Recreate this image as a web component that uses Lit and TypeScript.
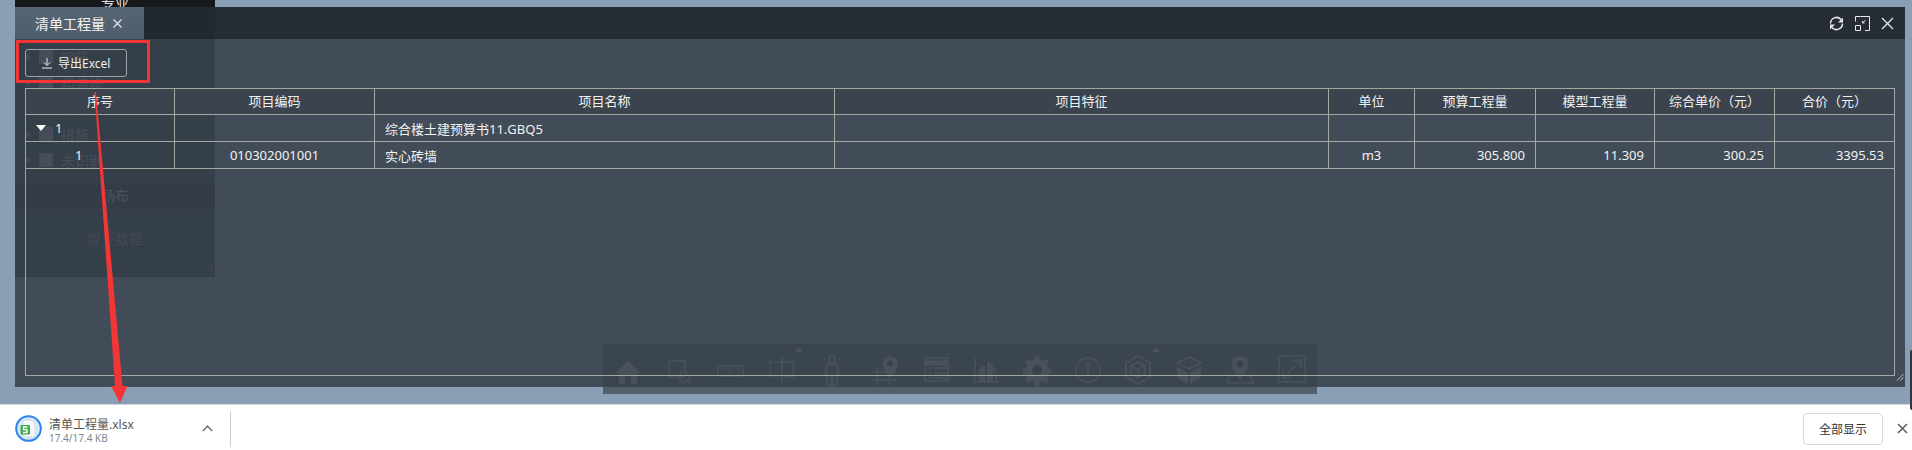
import { LitElement, html, css, svg } from "lit";
import { customElement } from "lit/decorators.js";

const ghostIcons = [
  svg`<path d="M13 6 L0 18 H4 V29 H10 V21 H16 V29 H22 V18 H26 Z" fill="currentColor" stroke="none"/>`,
  svg`<path d="M18 22H3V6H19V17"/><circle cx="18" cy="22" r="5"/><path d="M22 26l3 3"/>`,
  svg`<path d="M1 11H26V21H1Z"/><path d="M5 11v4M9 11v3M13 11v6M17 11v3M21 11v4"/>`,
  svg`<path d="M2 7H14M2 7V22M2 22H14" stroke-dasharray="3 2"/><path d="M14 7H25V22H14"/><path d="M14 2V28"/>`,
  svg`<circle cx="13" cy="4" r="3"/><path d="M8 9H18L20 19H18V30H14V21H12V30H8V19H6Z"/>`,
  svg`<path d="M20 1a7.500 7.500 0 0 1 7.500 7.500C27.500 13 23 19 20 23C17 19 12.500 13 12.500 8.500A7.500 7.500 0 0 1 20 1Z" fill="currentColor" stroke="none"/><circle cx="20" cy="8.500" r="3" fill="#3d4651" stroke="none"/><path d="M2 17H27M7 12V30M19 24V30M1 25H26"/>`,
  svg`<path d="M4 3H27V26H4Z"/><path d="M4 8H27" stroke-width="5"/><path d="M8 13h2M13 13h14M8 18h2M13 18h14M8 23h2M13 23h14"/>`,
  svg`<path d="M3 3V27H27"/><path d="M7 26V14L13 10V26ZM15 26V6L21 10V26Z" fill="currentColor" stroke="none"/><path d="M22 14L24 20V26"/>`,
  svg`<path d="M12 1h4l1 4 3 1 3-2 3 3-2 3 1 3 4 1v4l-4 1-1 3 2 3-3 3-3-2-3 1-1 4h-4l-1-4-3-1-3 2-3-3 2-3-1-3-4-1v-4l4-1 1-3-2-3 3-3 3 2 3-1Z" fill="currentColor" stroke="none"/><circle cx="14" cy="15" r="5" fill="#3d4651" stroke="none"/>`,
  svg`<circle cx="14" cy="15" r="12"/><path d="M14 13V21" stroke-width="2"/><circle cx="14" cy="9" r="1.200" fill="currentColor"/>`,
  svg`<path d="M13 1L25 8V22L13 29L1 22V8Z" stroke-width="2"/><path d="M6 11L13 7L20 11V19L13 23L6 19Z"/><path d="M6 11L13 15L20 11M13 15V23"/>`,
  svg`<path d="M13 2L25 8L13 14L1 8Z"/><path d="M1 12L12 18V29L1 23ZM25 12L14 18V29L25 23Z" fill="currentColor" stroke="none"/>`,
  svg`<path d="M13 1a8.500 8.500 0 0 1 8.500 8.500C21.500 14 16 21 13 25C10 21 4.500 14 4.500 9.500A8.500 8.500 0 0 1 13 1Z" fill="currentColor" stroke="none"/><circle cx="13" cy="9" r="3.500" fill="#3d4651" stroke="none"/><path d="M6 20H3L0 28H26L23 20H20"/>`,
  svg`<path d="M1 1H27V27H1Z"/><path d="M5 23L23 5M15 5H23V13M5 15V23H13"/>`,
];

const columns = [
  { title: "序号", width: 149 },
  { title: "项目编码", width: 200 },
  { title: "项目名称", width: 460 },
  { title: "项目特征", width: 494 },
  { title: "单位", width: 86 },
  { title: "预算工程量", width: 121 },
  { title: "模型工程量", width: 119 },
  { title: "综合单价（元）", width: 120 },
  { title: "合价（元）", width: 119 },
];

@customElement("app-root")
export class AppRoot extends LitElement {
  static styles = css`
    :host {
      display: flex;
      flex-direction: column;
      width: 1912px;
      height: 450px;
      overflow: hidden;
      position: relative;
      font-family: "Noto Sans", "Noto Sans CJK SC", sans-serif;
      background: #8a9fb5;
    }
    .scene { flex: 1; position: relative; }

    .side {
      position: absolute; left: 15px; top: -10px; width: 200px; height: 287px;
      background: rgba(0, 0, 0, .8); color: #ddd; font-size: 14px;
      display: flex; flex-direction: column;
    }
    .side-head { height: 25px; line-height: 25px; text-align: center; background: rgba(0,0,0,.2); flex: none; }
    .side-rows { padding-top: 29px; height: 139px; flex: none; box-sizing: content-box; display: flex; flex-direction: column; }
    .side-row { height: 25.7px; display: flex; align-items: center; gap: 8px; padding-left: 11px; flex: none; }
    .side-row i { border-left: 5px solid #999; border-top: 4px solid transparent; border-bottom: 4px solid transparent; }
    .side-row b { width: 14px; height: 14px; background: #bbb; border-radius: 2px; }
    .side-row span { opacity: .8; }
    .side-section {
      height: 24px; line-height: 24px; text-align: center; background: rgba(0,0,0,.6);
      border-top: 1px solid rgba(255,255,255,.08); border-bottom: 1px solid rgba(255,255,255,.08); flex: none;
    }
    .side-empty { flex: 1; text-align: center; padding-top: 19px; font-size: 14px; color: #888; }
    .side-grip { position: absolute; right: 2px; bottom: 2px; }

    .toolbar {
      position: absolute; left: 603px; top: 344px; height: 50px; display: flex;
      background: rgba(0, 0, 0, .4); color: #dcdcdc;
    }
    .tool { width: 51px; display: flex; align-items: center; justify-content: center; position: relative; padding-top: 2px; box-sizing: border-box; }
    .tool svg { fill: none; stroke: currentColor; stroke-width: 1.5; width: 28px; height: 31px; }
    .tool.more::after {
      content: ""; position: absolute; left: 39px; top: 3px;
      border-bottom: 5px solid #dcdcdc; border-left: 4.500px solid transparent; border-right: 4.500px solid transparent;
    }

    .modal {
      position: absolute; left: 15px; top: 7px; width: 1890px; height: 380px;
      background: rgba(57, 67, 78, .9); display: flex; flex-direction: column; color: #fff;
    }
    .modal-head {
      height: 32px; flex: none; display: flex; align-items: stretch; justify-content: space-between;
      background: rgba(26, 32, 37, .72);
    }
    .tab {
      width: 129px; display: flex; align-items: center; gap: 8px; padding-left: 20px; box-sizing: border-box;
      background: linear-gradient(#566675, #4e5d6b); font-size: 14px; color: #f4f4f4;
    }
    .actions { display: flex; align-items: center; gap: 8px; padding-right: 11px; }
    .actions svg { display: block; fill: none; stroke: #e8e8e8; }
    .modal-body { flex: 1; display: flex; flex-direction: column; padding: 10px 10px 11px; gap: 11px; min-height: 0; }
    .export {
      width: 102px; height: 28px; box-sizing: border-box; border: 1px solid #a0a0a0; border-radius: 3px;
      background: transparent; color: #f0f0f0; font: 12px "Noto Sans", "Noto Sans CJK SC", sans-serif;
      display: flex; align-items: center; gap: 6px; padding: 0 0 0 16px; flex: none;
    }
    .grid-box { flex: 1; border: 1px solid #a6a6a2; min-height: 0; }
    table { border-collapse: separate; border-spacing: 0; table-layout: fixed; width: 1868px; font-size: 13px; color: #f2f2f2; }
    th, td { border-right: 1px solid #a6a6a2; border-bottom: 1px solid #a6a6a2; padding: 0 10px; box-sizing: border-box; text-align: center; font-weight: 400; white-space: nowrap; }
    th { height: 26px; background: #3a434e; padding-bottom: 2px; }
    th:last-child, td:last-child { border-right: none; }
    td { height: 27px; }
    td.l { text-align: left; }
    td.r { text-align: right; }
    td.idx { text-align: left; padding-left: 49px; }
    .tree { display: flex; align-items: center; gap: 9px; }
    .tree i { border-top: 6px solid #fff; border-left: 5.500px solid transparent; border-right: 5.500px solid transparent; }
    .grip { position: absolute; right: 1px; bottom: 1px; }

    .annot { position: absolute; left: 0; top: 0; pointer-events: none; }

    .downloads {
      height: 46px; flex: none; background: #fff; border-top: 1px solid #d4d8dc; box-sizing: border-box;
      display: flex; align-items: center; position: relative; z-index: 2;
    }
    .file { display: flex; align-items: center; width: 231px; height: 36px; box-sizing: border-box; border-right: 1px solid #cfcfcf; padding-left: 15px; gap: 7px; margin-top: 2px; }
    .file-text { display: flex; flex-direction: column; flex: 1; line-height: 14px; margin-top: 6px; }
    .file-name { font-size: 12px; color: #555; }
    .file-size { font-size: 10px; color: #7b8794; line-height: 13px; }
    .chev { margin-right: 17px; }
    .spacer { flex: 1; }
    .show-all {
      width: 80px; height: 32px; box-sizing: border-box; border: 1px solid #dadada; border-radius: 4px; background: #fff;
      font: 12px "Noto Sans CJK SC", sans-serif; color: #333; padding: 0; margin-top: 2px;
    }
    .dl-close { margin: 2px 4px 0 14px; display: block; }
    .edge { position: absolute; right: 0; top: 350px; width: 2px; height: 60px; background: #2e3640; border-radius: 2px 0 0 2px; z-index: 3; }
  `;

  private grip(color: string) {
    return html`<svg width="8" height="8" viewBox="0 0 8 8" fill="none" stroke=${color}><path d="M1 7.500L7.500 1M4.500 7.500L7.500 4.500"/></svg>`;
  }

  render() {
    return html`
      <div class="scene">
        <div class="side">
          <div class="side-head">专业</div>
          <div class="side-rows">
            ${["钢筋", "粗装修", "幕墙", "措施", "未识别"].map(
              (t) => html`<div class="side-row"><i></i><b></b><span>${t}</span></div>`
            )}
          </div>
          <div class="side-section">场布</div>
          <div class="side-empty">暂无数据</div>
          <div class="side-grip">${this.grip("#aaa")}</div>
        </div>

        <div class="toolbar">
          ${ghostIcons.map(
            (ic, i) => html`<div class="tool ${i === 3 || i === 10 ? "more" : ""}"><svg viewBox="0 0 28 31">${ic}</svg></div>`
          )}
        </div>

        <div class="modal">
          <div class="modal-head">
            <div class="tab">
              <span>清单工程量</span>
              <svg width="9" height="9" viewBox="0 0 9 9" stroke="#e8e8e8" stroke-width="1.100"><path d="M.5.5l8 8M8.500.5l-8 8"/></svg>
            </div>
            <div class="actions">
              <svg width="15" height="15" viewBox="0 0 15 15" stroke-width="1.500">
                <path d="M1.500 7.500A6 6 0 0 1 12 3.500"/><path d="M13.500 7.500A6 6 0 0 1 3 11.500"/>
                <path d="M14 1.500V6.500H9ZM1 13.500V8.500H6Z" fill="#e8e8e8" stroke="none"/>
              </svg>
              <svg style="margin:0 3px" width="15" height="15" viewBox="0 0 15 15" stroke-width="1"><path d="M5.500.5H14.500V14.500H10M.5 5.500V.5H5.500M.5 9.500H5.500V14.500H.5Z"/><path d="M10.500 4L7.500 7M7.500 5V7H9.500"/></svg>
              <svg width="13" height="13" viewBox="0 0 13 13" stroke-width="1.300"><path d="M1 1l11 11M12 1L1 12"/></svg>
            </div>
          </div>
          <div class="modal-body">
            <button class="export">
              <svg width="10" height="11" viewBox="0 0 10 11" fill="none" stroke="#f0f0f0"><path d="M5 0V7M2 4.500L5 7.500L8 4.500M0 10H10"/></svg>
              <span>导出Excel</span>
            </button>
            <div class="grid-box">
              <table>
                <colgroup>${columns.map((c) => html`<col style="width:${c.width}px" />`)}</colgroup>
                <thead><tr>${columns.map((c) => html`<th>${c.title}</th>`)}</tr></thead>
                <tbody>
                  <tr>
                    <td class="l"><div class="tree"><i></i><span>1</span></div></td>
                    <td></td>
                    <td class="l">综合楼土建预算书11.GBQ5</td>
                    <td></td><td></td><td></td><td></td><td></td><td></td>
                  </tr>
                  <tr>
                    <td class="idx">1</td>
                    <td>010302001001</td>
                    <td class="l">实心砖墙</td>
                    <td></td>
                    <td>m3</td>
                    <td class="r">305.800</td>
                    <td class="r">11.309</td>
                    <td class="r">300.25</td>
                    <td class="r">3395.53</td>
                  </tr>
                </tbody>
              </table>
            </div>
          </div>
          <div class="grip">${this.grip("#c4c4c4")}</div>
        </div>

        <svg class="annot" width="1912" height="404" viewBox="0 0 1912 404">
          <rect x="17.500" y="41.500" width="131" height="40" fill="none" stroke="#f33535" stroke-width="3"/>
          <path d="M94.500 92L96 92L122.500 386H127.500L120 403L111 386H115Z" fill="#f33535"/>
        </svg>
      </div>

      <div class="downloads">
        <div class="file">
          <svg width="27" height="27" viewBox="0 0 27 27">
            <circle cx="13.500" cy="13.500" r="12.300" fill="#d9e7fb" stroke="#2b84e8" stroke-width="2"/>
            <path d="M8 5H16L20 9V22H8Z" fill="#f4f7fb" stroke="#c5d0dc" stroke-width=".6"/>
            <rect x="5.500" y="10" width="9.500" height="9.500" rx="1" fill="#43ad4a"/>
            <path d="M12.500 12H8.500V14.700H12V17.500H8" fill="none" stroke="#fff" stroke-width="1.300"/>
          </svg>
          <div class="file-text">
            <span class="file-name">清单工程量.xlsx</span>
            <span class="file-size">17.4/17.4 KB</span>
          </div>
          <svg class="chev" width="11" height="7" viewBox="0 0 11 7" fill="none" stroke="#777" stroke-width="1.600"><path d="M.8 6L5.500 1.200L10.200 6"/></svg>
        </div>
        <div class="spacer"></div>
        <button class="show-all">全部显示</button>
        <svg class="dl-close" width="11" height="11" viewBox="0 0 11 11" fill="none" stroke="#666" stroke-width="1.700"><path d="M1 1l9 9M10 1l-9 9"/></svg>
      </div>
      <div class="edge"></div>
    `;
  }
}
